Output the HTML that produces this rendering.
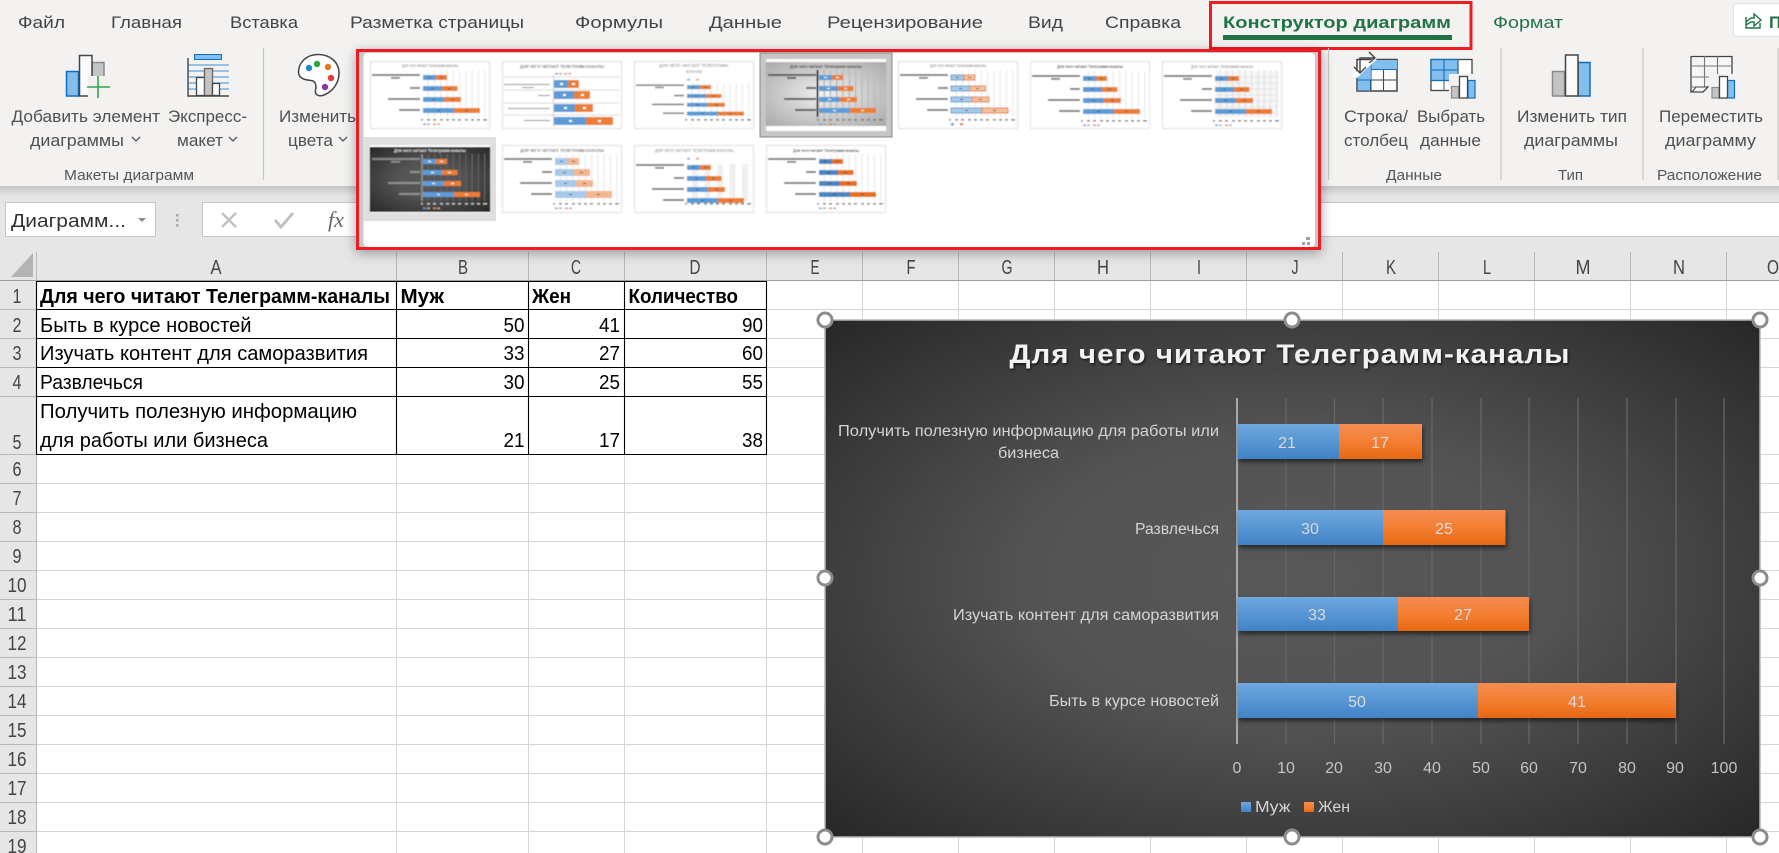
<!DOCTYPE html>
<html lang="ru"><head><meta charset="utf-8"><title>Excel</title>
<style>
html,body{margin:0;padding:0;background:#fff;width:1779px;height:853px;overflow:hidden}
svg{display:block;font-family:"Liberation Sans","Noto Sans CJK SC",sans-serif}
.tab{font-size:17px;fill:#444}
.rb{font-size:16.5px;fill:#505050}
.grp{font-size:15px;fill:#555}
.cell{font-size:20px;fill:#000}
.b{font-weight:bold}
.hd{font-size:20px;fill:#444;text-anchor:middle}
.cat{font-size:15.5px;fill:#d4d4d4}
.dl{font-size:16px;fill:#dadada;text-anchor:middle}
.ax{font-size:16px;fill:#c4c4c4;text-anchor:middle}
.bl{fill:#5b9bd5}.or{fill:#ed7d31}
.ttl{font-size:4.6px;fill:#777;text-anchor:middle}
</style></head><body>
<svg width="1779" height="853" viewBox="0 0 1779 853" xmlns="http://www.w3.org/2000/svg">
<defs>
<radialGradient id="cg" cx=".5" cy=".5" r=".71"><stop offset="0" stop-color="#585858"/><stop offset=".4" stop-color="#535353"/><stop offset="1" stop-color="#272727"/></radialGradient>
<radialGradient id="lg" cx=".5" cy=".5" r=".71"><stop offset="0" stop-color="#f2f2f2"/><stop offset="1" stop-color="#a8a8a8"/></radialGradient>
<linearGradient id="gb" x1="0" y1="0" x2="0" y2="1"><stop offset="0" stop-color="#6fa8df"/><stop offset="1" stop-color="#4083c6"/></linearGradient>
<linearGradient id="go" x1="0" y1="0" x2="0" y2="1"><stop offset="0" stop-color="#f58c52"/><stop offset=".5" stop-color="#f47f33"/><stop offset="1" stop-color="#e76711"/></linearGradient>
<linearGradient id="sh" x1="0" y1="0" x2="0" y2="1"><stop offset="0" stop-color="#c4c4c4"/><stop offset="1" stop-color="#e6e6e6"/></linearGradient>
<filter id="bs" x="-10%" y="-30%" width="120%" height="180%"><feDropShadow dx="1" dy="3" stdDeviation="2.5" flood-color="#000" flood-opacity=".55"/></filter>
<filter id="ts" x="-5%" y="-30%" width="110%" height="170%"><feDropShadow dx="1" dy="1.5" stdDeviation="1.2" flood-color="#000" flood-opacity=".7"/></filter>
<filter id="gs" x="-5%" y="-10%" width="110%" height="125%"><feDropShadow dx="0" dy="3" stdDeviation="6" flood-color="#000" flood-opacity=".35"/></filter>
<filter id="bl" x="-5%" y="-5%" width="110%" height="110%"><feGaussianBlur stdDeviation=".5"/></filter>
<g id="L" fill="#555" opacity=".75">
<rect x="2" y="13" width="48" height="2"/><rect x="21" y="16" width="9" height="1.800"/><rect x="40" y="26" width="10" height="2"/><rect x="18" y="37" width="32" height="2"/><rect x="29" y="48" width="21" height="2"/></g>
<g id="G" stroke-width="1.4"><path d="M58.3 9V56M64.5 9V56M70.8 9V56M77 9V56M83.4 9V56M89.6 9V56M95.9 9V56M102.2 9V56M108.4 9V56M114.7 9V56"/></g>
<g id="X" fill="#666" opacity=".8"><path d="M51 58h2v1.600h-2zM57 58h3v1.600h-3zM63 58h3v1.600h-3zM70 58h3v1.600h-3zM76 58h3v1.600h-3zM82 58h3v1.600h-3zM88 58h3v1.600h-3zM95 58h3v1.600h-3zM101 58h3v1.600h-3zM107 58h3v1.600h-3zM113 58h4v1.600h-4z"/></g>
<g id="BL"><rect x="53" y="14" width="13" height="5"/><rect x="53" y="25" width="19" height="5"/><rect x="53" y="36" width="21" height="5"/><rect x="53" y="47" width="31" height="5"/></g>
<g id="BO"><rect x="66" y="14" width="11" height="5"/><rect x="72" y="25" width="15.5" height="5"/><rect x="74" y="36" width="17" height="5"/><rect x="84" y="47" width="26" height="5"/></g>
<g id="LG"><rect x="53" y="62.5" width="3" height="1.5" fill="#5b9bd5"/><rect x="57" y="62.5" width="3" height="1.5" fill="#aaa"/><rect x="63" y="62.5" width="3" height="1.5" fill="#ed7d31"/><rect x="67" y="62.5" width="3" height="1.5" fill="#aaa"/></g>
<g id="D"><path d="M58 16h3v1h-3zM70 16h3v1h-3zM61 27h3v1h-3zM78 27h3v1h-3zM62 38h3v1h-3zM81 38h3v1h-3zM67 49h3v1h-3zM95 49h3v1h-3z"/></g>
</defs>

<!-- ribbon -->
<rect width="1779" height="186" fill="#f3f2f1"/>
<rect y="186" width="1779" height="10" fill="url(#sh)"/>
<rect y="196" width="1779" height="54" fill="#e6e6e6"/>

<text class="tab" x="18" y="28" textLength="47" lengthAdjust="spacingAndGlyphs">Файл</text>
<text class="tab" x="111" y="28" textLength="71" lengthAdjust="spacingAndGlyphs">Главная</text>
<text class="tab" x="230" y="28" textLength="68" lengthAdjust="spacingAndGlyphs">Вставка</text>
<text class="tab" x="350" y="28" textLength="174" lengthAdjust="spacingAndGlyphs">Разметка страницы</text>
<text class="tab" x="575" y="28" textLength="88" lengthAdjust="spacingAndGlyphs">Формулы</text>
<text class="tab" x="709" y="28" textLength="73" lengthAdjust="spacingAndGlyphs">Данные</text>
<text class="tab" x="827" y="28" textLength="156" lengthAdjust="spacingAndGlyphs">Рецензирование</text>
<text class="tab" x="1028" y="28" textLength="35" lengthAdjust="spacingAndGlyphs">Вид</text>
<text class="tab" x="1105" y="28" textLength="76" lengthAdjust="spacingAndGlyphs">Справка</text>
<text class="tab b" x="1223" y="28" textLength="228" lengthAdjust="spacingAndGlyphs" style="fill:#217346">Конструктор диаграмм</text>
<rect x="1223" y="35" width="229" height="5" fill="#217346"/>
<rect x="1210.5" y="2.5" width="260.500" height="46" fill="none" stroke="#ed1c24" stroke-width="3"/>
<text class="tab" x="1493" y="28" textLength="70" lengthAdjust="spacingAndGlyphs" style="fill:#217346">Формат</text>
<rect x="1733.500" y="3.500" width="50" height="33" rx="3" fill="#fff" stroke="#e3e3e3"/>
<path d="M1746 17v11h14v-5M1746 22l5-4h3v-4l7 6-7 6v-4h-3l-5 3" fill="none" stroke="#217346" stroke-width="1.4"/>
<text class="tab b" x="1769" y="28" style="fill:#217346">П</text>

<!-- separators -->
<g stroke="#c8c6c4" stroke-width="1.2"><path d="M263.500 48V180M1328.500 48V180M1501 48V180M1643 48V180M1778 48V180"/></g>

<!-- add element icon -->
<rect x="66.500" y="71.500" width="12" height="24.500" fill="#83beec" stroke="#106ebe" stroke-width="1.5"/>
<rect x="92" y="62.500" width="12" height="33.500" fill="#c4c4c4" stroke="#8a8a8a" stroke-width="1.5"/>
<rect x="79.500" y="55.500" width="12.500" height="40.500" fill="#fafafa" stroke="#444" stroke-width="1.5"/>
<rect x="88" y="76" width="20" height="22" fill="#f3f2f1"/>
<path d="M98 76V98M87 87H110" stroke="#2fa84f" stroke-width="1.6"/>
<!-- express layout icon -->
<rect x="194.500" y="54.500" width="27" height="5" fill="#83beec" stroke="#106ebe"/>
<g stroke="#5ba4e0" stroke-width="1.2"><path d="M188 65H229M188 71H229M188 77H229M188 83H229M188 89H229"/></g>
<rect x="196.500" y="77.500" width="8" height="18" fill="#fff" stroke="#444" stroke-width="1.3"/>
<rect x="204.500" y="68.500" width="8" height="27" fill="#c4c4c4" stroke="#666" stroke-width="1.3"/>
<rect x="212.500" y="83.500" width="7" height="12" fill="#fff" stroke="#444" stroke-width="1.3"/>
<path d="M188 58V96H229" fill="none" stroke="#444" stroke-width="1.4"/>
<!-- palette -->
<path d="M318 54.500C306 54.500 298.500 63 298.500 72C298.500 79 306 80 311 80.500C316 81 316.500 86 315.500 90C314.500 95 319 97 324 95C334 91 339 82 339 73C339 62 330 54.500 318 54.500Z" fill="#fff" stroke="#444" stroke-width="1.5"/>
<circle cx="309" cy="68" r="3.200" fill="#1b87d6"/><circle cx="317" cy="64" r="3.200" fill="#2ba24c"/><circle cx="328" cy="67" r="3.200" fill="#e8791f"/><circle cx="331" cy="78" r="3.200" fill="#e63a3a"/><circle cx="325" cy="87" r="3.200" fill="#8c34a8"/>

<text class="rb" x="11.500" y="122" textLength="148.500" lengthAdjust="spacingAndGlyphs">Добавить элемент</text>
<text class="rb" x="30" y="146" textLength="94" lengthAdjust="spacingAndGlyphs">диаграммы</text>
<path d="M132 137l4 4 4-4" fill="none" stroke="#555" stroke-width="1.300"/>
<text class="rb" x="168" y="122" textLength="79" lengthAdjust="spacingAndGlyphs">Экспресс-</text>
<text class="rb" x="177" y="146" textLength="46" lengthAdjust="spacingAndGlyphs">макет</text>
<path d="M229 137l4 4 4-4" fill="none" stroke="#555" stroke-width="1.300"/>
<text class="rb" x="279" y="122" textLength="77" lengthAdjust="spacingAndGlyphs">Изменить</text>
<text class="rb" x="288" y="146" textLength="45" lengthAdjust="spacingAndGlyphs">цвета</text>
<path d="M339 137l4 4 4-4" fill="none" stroke="#555" stroke-width="1.300"/>
<text class="grp" x="64" y="180" textLength="130" lengthAdjust="spacingAndGlyphs">Макеты диаграмм</text>

<!-- switch row/col icon -->
<rect x="1357" y="59.500" width="40" height="31.500" fill="#fbfbfb" stroke="#444" stroke-width="1.500"/>
<path d="M1371 60H1397V69H1371ZM1358 80H1370V90.500H1358ZM1371 60L1358 77V80H1370V60Z" fill="#83beec"/>
<g stroke="#4a4a4a" stroke-width="1.100"><path d="M1383.500 69V91M1370.500 80V91M1370.500 69.500H1397M1370.500 80H1397"/></g>
<path d="M1371 59.500V91M1357 80H1371M1371 69.500H1397" stroke="#106ebe" stroke-width="1.100" fill="none"/>
<path d="M1374 59L1377 59.500L1357 77L1357 73Z" fill="#f3f2f1"/>
<path d="M1370 53H1351V73H1365V53Z" fill="none"/>
<path d="M1352 75L1376 56V59L1357 78Z" fill="#fff"/>
<path d="M1375 58H1360V73M1369 52L1375 58L1369 63M1354 67L1360 73L1366 67" fill="none" stroke="#444" stroke-width="1.400"/>
<!-- select data icon -->
<rect x="1431" y="59.500" width="41" height="31" fill="#fff" stroke="#444" stroke-width="1.300"/>
<rect x="1431" y="59.500" width="27" height="21" fill="#83beec" stroke="#106ebe" stroke-width="1.300"/>
<g stroke="#106ebe" stroke-width="1.100"><path d="M1444 59V80M1431 70H1458"/></g>
<path d="M1444 81V91M1458 59V75" stroke="#666" stroke-width="1.100"/>
<rect x="1449" y="74" width="28" height="25" fill="#f3f2f1"/>
<rect x="1451.500" y="86.500" width="7" height="11.500" fill="#c4c4c4" stroke="#8a8a8a" stroke-width="1.200"/>
<rect x="1468" y="80.500" width="7" height="17.500" fill="#83beec" stroke="#106ebe" stroke-width="1.200"/>
<rect x="1459.500" y="76.500" width="8" height="21.500" fill="#fff" stroke="#444" stroke-width="1.300"/>
<text class="rb" x="1344" y="122" textLength="64" lengthAdjust="spacingAndGlyphs">Строка/</text>
<text class="rb" x="1344" y="146" textLength="64" lengthAdjust="spacingAndGlyphs">столбец</text>
<text class="rb" x="1417" y="122" textLength="68" lengthAdjust="spacingAndGlyphs">Выбрать</text>
<text class="rb" x="1420" y="146" textLength="61" lengthAdjust="spacingAndGlyphs">данные</text>
<text class="grp" x="1386" y="180" textLength="56" lengthAdjust="spacingAndGlyphs">Данные</text>
<!-- change type icon -->
<rect x="1552.500" y="71.500" width="12" height="24.500" fill="#c4c4c4" stroke="#8a8a8a" stroke-width="1.500"/>
<rect x="1578" y="62.500" width="12" height="33.500" fill="#83beec" stroke="#106ebe" stroke-width="1.500"/>
<rect x="1565.500" y="55" width="12.500" height="41" fill="#fafafa" stroke="#444" stroke-width="1.500"/>
<text class="rb" x="1517" y="122" textLength="110" lengthAdjust="spacingAndGlyphs">Изменить тип</text>
<text class="rb" x="1524" y="146" textLength="94" lengthAdjust="spacingAndGlyphs">диаграммы</text>
<text class="grp" x="1558" y="180" textLength="25" lengthAdjust="spacingAndGlyphs">Тип</text>
<!-- move chart icon -->
<path d="M1691 56.500H1732V80M1691 56.500V92H1703L1708 87V86" fill="#f7f7f7" stroke="#444" stroke-width="1.300"/>
<path d="M1691 66H1732M1691 77H1732M1691 87H1708M1704.500 56V87M1717.500 56V87" stroke="#777" stroke-width="1.100" fill="none"/>
<path d="M1692 92l4-5h12" fill="none" stroke="#444" stroke-width="1.100"/>
<rect x="1709" y="74" width="28" height="25" fill="#f3f2f1"/>
<rect x="1712" y="87.500" width="7" height="10.500" fill="#c4c4c4" stroke="#8a8a8a" stroke-width="1.200"/>
<rect x="1727.500" y="80.500" width="7" height="17.500" fill="#83beec" stroke="#106ebe" stroke-width="1.200"/>
<rect x="1719.500" y="76.500" width="8" height="21.500" fill="#fff" stroke="#444" stroke-width="1.300"/>
<text class="rb" x="1659" y="122" textLength="104" lengthAdjust="spacingAndGlyphs">Переместить</text>
<text class="rb" x="1665" y="146" textLength="91" lengthAdjust="spacingAndGlyphs">диаграмму</text>
<text class="grp" x="1657" y="180" textLength="105" lengthAdjust="spacingAndGlyphs">Расположение</text>

<!-- formula bar -->
<rect x="5.500" y="202.500" width="150" height="34" fill="#fff" stroke="#c6c6c6"/>
<text x="11" y="227" font-size="18" fill="#333" textLength="115" lengthAdjust="spacingAndGlyphs">Диаграмм...</text>
<path d="M138 218h8l-4 4z" fill="#8a8a8a"/>
<path d="M176 214h2.500v2.500h-2.500zM176 219h2.500v2.500h-2.500zM176 224h2.500v2.500h-2.500z" fill="#a8a8a8"/>
<rect x="202.500" y="202.500" width="1580" height="34" fill="#fff" stroke="#c6c6c6"/>
<path d="M222 213L236 227M236 213L222 227" stroke="#c2c2c2" stroke-width="2.400"/>
<path d="M275 220L281 227L293 213" fill="none" stroke="#c2c2c2" stroke-width="3"/>
<text x="328" y="227" font-size="22" fill="#666" style="font-family:'Liberation Serif',serif;font-style:italic">fx</text>

<!-- grid lines -->
<g stroke="#d6d6d6" stroke-width="1">
<path d="M766.500 281V853M862.500 281V853M958.500 281V853M1054.500 281V853M1150.500 281V853M1246.500 281V853M1342.500 281V853M1438.500 281V853M1534.500 281V853M1630.500 281V853M1726.500 281V853"/>
<path d="M396.500 454V853M528.500 454V853M624.500 454V853"/>
<path d="M36 483.500H1779M36 512.500H1779M36 541.500H1779M36 570.500H1779M36 599.500H1779M36 628.500H1779M36 657.500H1779M36 686.500H1779M36 715.500H1779M36 744.500H1779M36 773.500H1779M36 802.500H1779M36 831.500H1779"/>
<path d="M766 309.500H1779M766 338.500H1779M766 367.500H1779M766 396.500H1779M766 454.500H1779"/>
</g>

<!-- headers -->
<rect y="250" width="1779" height="31" fill="#e6e6e6"/>
<rect y="250" width="36" height="603" fill="#e6e6e6"/>
<g stroke="#b8b8b8"><path d="M36.500 252V853M396.500 252V281M528.500 252V281M624.500 252V281M766.500 252V281M862.500 252V281M958.500 252V281M1054.500 252V281M1150.500 252V281M1246.500 252V281M1342.500 252V281M1438.500 252V281M1534.500 252V281M1630.500 252V281M1726.500 252V281"/>
<path d="M0 309.500H36M0 338.500H36M0 367.500H36M0 396.500H36M0 454.500H36M0 483.500H36M0 512.500H36M0 541.500H36M0 570.500H36M0 599.500H36M0 628.500H36M0 657.500H36M0 686.500H36M0 715.500H36M0 744.500H36M0 773.500H36M0 802.500H36M0 831.500H36"/></g>
<path d="M0 280.500H1779" stroke="#9e9e9e"/>
<path d="M33 253V277H11Z" fill="#b4b4b4"/>
<text class="hd" x="216" y="274" textLength="11" lengthAdjust="spacingAndGlyphs">A</text>
<text class="hd" x="463" y="274" textLength="10" lengthAdjust="spacingAndGlyphs">B</text><text class="hd" x="576" y="274" textLength="10" lengthAdjust="spacingAndGlyphs">C</text><text class="hd" x="695" y="274" textLength="11" lengthAdjust="spacingAndGlyphs">D</text><text class="hd" x="815" y="274" textLength="9" lengthAdjust="spacingAndGlyphs">E</text><text class="hd" x="911" y="274" textLength="9" lengthAdjust="spacingAndGlyphs">F</text><text class="hd" x="1007" y="274" textLength="11" lengthAdjust="spacingAndGlyphs">G</text><text class="hd" x="1103" y="274" textLength="12" lengthAdjust="spacingAndGlyphs">H</text><text class="hd" x="1199" y="274" textLength="4" lengthAdjust="spacingAndGlyphs">I</text><text class="hd" x="1295" y="274" textLength="7" lengthAdjust="spacingAndGlyphs">J</text><text class="hd" x="1391" y="274" textLength="10" lengthAdjust="spacingAndGlyphs">K</text><text class="hd" x="1487" y="274" textLength="8" lengthAdjust="spacingAndGlyphs">L</text><text class="hd" x="1583" y="274" textLength="15" lengthAdjust="spacingAndGlyphs">M</text><text class="hd" x="1679" y="274" textLength="12" lengthAdjust="spacingAndGlyphs">N</text><text class="hd" x="1773" y="274" textLength="12" lengthAdjust="spacingAndGlyphs">O</text>
<text class="hd" x="17" y="303" textLength="9" lengthAdjust="spacingAndGlyphs">1</text><text class="hd" x="17" y="332" textLength="9" lengthAdjust="spacingAndGlyphs">2</text><text class="hd" x="17" y="360" textLength="9" lengthAdjust="spacingAndGlyphs">3</text><text class="hd" x="17" y="389" textLength="9" lengthAdjust="spacingAndGlyphs">4</text><text class="hd" x="17" y="449" textLength="9" lengthAdjust="spacingAndGlyphs">5</text><text class="hd" x="17" y="476" textLength="9" lengthAdjust="spacingAndGlyphs">6</text><text class="hd" x="17" y="505" textLength="9" lengthAdjust="spacingAndGlyphs">7</text><text class="hd" x="17" y="534" textLength="9" lengthAdjust="spacingAndGlyphs">8</text><text class="hd" x="17" y="563" textLength="9" lengthAdjust="spacingAndGlyphs">9</text><text class="hd" x="17" y="592" textLength="19" lengthAdjust="spacingAndGlyphs">10</text><text class="hd" x="17" y="621" textLength="19" lengthAdjust="spacingAndGlyphs">11</text><text class="hd" x="17" y="650" textLength="19" lengthAdjust="spacingAndGlyphs">12</text><text class="hd" x="17" y="679" textLength="19" lengthAdjust="spacingAndGlyphs">13</text><text class="hd" x="17" y="708" textLength="19" lengthAdjust="spacingAndGlyphs">14</text><text class="hd" x="17" y="737" textLength="19" lengthAdjust="spacingAndGlyphs">15</text><text class="hd" x="17" y="766" textLength="19" lengthAdjust="spacingAndGlyphs">16</text><text class="hd" x="17" y="795" textLength="19" lengthAdjust="spacingAndGlyphs">17</text><text class="hd" x="17" y="824" textLength="19" lengthAdjust="spacingAndGlyphs">18</text><text class="hd" x="17" y="853" textLength="19" lengthAdjust="spacingAndGlyphs">19</text>

<!-- table -->
<g stroke="#000" stroke-width="1.100"><path d="M36.500 281V454M396.500 281V454M528.500 281V454M624.500 281V454M766.500 281V454M36 281.500H767M36 309.500H767M36 338.500H767M36 367.500H767M36 396.500H767M36 454.500H767"/></g>
<text class="cell b" x="40" y="303" textLength="350" lengthAdjust="spacingAndGlyphs">Для чего читают Телеграмм-каналы</text>
<text class="cell b" x="400.500" y="303" textLength="43.500" lengthAdjust="spacingAndGlyphs">Муж</text>
<text class="cell b" x="532" y="303" textLength="39" lengthAdjust="spacingAndGlyphs">Жен</text>
<text class="cell b" x="628.500" y="303" textLength="109.500" lengthAdjust="spacingAndGlyphs">Количество</text>
<text class="cell" x="40" y="332" textLength="211.500" lengthAdjust="spacingAndGlyphs">Быть в курсе новостей</text>
<text class="cell" x="40" y="360" textLength="328" lengthAdjust="spacingAndGlyphs">Изучать контент для саморазвития</text>
<text class="cell" x="40" y="389" textLength="103" lengthAdjust="spacingAndGlyphs">Развлечься</text>
<text class="cell" x="40" y="418" textLength="317" lengthAdjust="spacingAndGlyphs">Получить полезную информацию</text>
<text class="cell" x="40" y="447" textLength="228" lengthAdjust="spacingAndGlyphs">для работы или бизнеса</text>
<g text-anchor="end">
<text class="cell" x="524.500" y="332" textLength="21" lengthAdjust="spacingAndGlyphs">50</text><text class="cell" x="620" y="332" textLength="21" lengthAdjust="spacingAndGlyphs">41</text><text class="cell" x="763" y="332" textLength="21" lengthAdjust="spacingAndGlyphs">90</text>
<text class="cell" x="524.500" y="360" textLength="21" lengthAdjust="spacingAndGlyphs">33</text><text class="cell" x="620" y="360" textLength="21" lengthAdjust="spacingAndGlyphs">27</text><text class="cell" x="763" y="360" textLength="21" lengthAdjust="spacingAndGlyphs">60</text>
<text class="cell" x="524.500" y="389" textLength="21" lengthAdjust="spacingAndGlyphs">30</text><text class="cell" x="620" y="389" textLength="21" lengthAdjust="spacingAndGlyphs">25</text><text class="cell" x="763" y="389" textLength="21" lengthAdjust="spacingAndGlyphs">55</text>
<text class="cell" x="524.500" y="447" textLength="21" lengthAdjust="spacingAndGlyphs">21</text><text class="cell" x="620" y="447" textLength="21" lengthAdjust="spacingAndGlyphs">17</text><text class="cell" x="763" y="447" textLength="21" lengthAdjust="spacingAndGlyphs">38</text>
</g>

<!-- chart -->
<rect x="825" y="320" width="935" height="517" fill="url(#cg)"/>
<rect x="825" y="320" width="935" height="517" fill="none" stroke="#b5b5b5" stroke-width="1.500"/>
<text x="1290" y="363" font-size="27" font-weight="bold" fill="#f2f2f2" text-anchor="middle" filter="url(#ts)" textLength="561" lengthAdjust="spacingAndGlyphs" style="letter-spacing:1px">Для чего читают Телеграмм-каналы</text>
<g stroke="#666" stroke-width="1.300"><path d="M1286 398V744M1334.500 398V744M1383 398V744M1432 398V744M1481 398V744M1529 398V744M1578 398V744M1627 398V744M1676 398V744M1724 398V744"/></g>
<rect x="1236" y="398" width="2" height="346" fill="#a8a8a8"/>
<g filter="url(#bs)">
<rect x="1238" y="424" width="101" height="35" fill="url(#gb)"/><rect x="1339" y="424" width="83" height="35" fill="url(#go)"/>
<rect x="1238" y="510" width="145" height="35" fill="url(#gb)"/><rect x="1383" y="510" width="122.500" height="35" fill="url(#go)"/>
<rect x="1238" y="597" width="160" height="34" fill="url(#gb)"/><rect x="1398" y="597" width="131" height="34" fill="url(#go)"/>
<rect x="1238" y="683" width="240" height="35" fill="url(#gb)"/><rect x="1478" y="683" width="198" height="35" fill="url(#go)"/>
</g>
<text class="dl" x="1287" y="448">21</text><text class="dl" x="1380" y="448">17</text>
<text class="dl" x="1310" y="534">30</text><text class="dl" x="1444" y="534">25</text>
<text class="dl" x="1317" y="620">33</text><text class="dl" x="1463" y="620">27</text>
<text class="dl" x="1357" y="707">50</text><text class="dl" x="1577" y="707">41</text>
<text class="cat" x="838" y="436" textLength="381" lengthAdjust="spacingAndGlyphs">Получить полезную информацию для работы или</text>
<text class="cat" x="998" y="458" textLength="61" lengthAdjust="spacingAndGlyphs">бизнеса</text>
<text class="cat" x="1135" y="534" textLength="84" lengthAdjust="spacingAndGlyphs">Развлечься</text>
<text class="cat" x="953" y="620" textLength="266" lengthAdjust="spacingAndGlyphs">Изучать контент для саморазвития</text>
<text class="cat" x="1049" y="706" textLength="170" lengthAdjust="spacingAndGlyphs">Быть в курсе новостей</text>
<text class="ax" x="1237" y="773">0</text><text class="ax" x="1286" y="773">10</text><text class="ax" x="1334" y="773">20</text><text class="ax" x="1383" y="773">30</text><text class="ax" x="1432" y="773">40</text><text class="ax" x="1481" y="773">50</text><text class="ax" x="1529" y="773">60</text><text class="ax" x="1578" y="773">70</text><text class="ax" x="1627" y="773">80</text><text class="ax" x="1675" y="773">90</text><text class="ax" x="1724" y="773">100</text>
<rect x="1241" y="802" width="10" height="10" fill="url(#gb)"/>
<text class="cat" x="1255" y="812" textLength="35.500" lengthAdjust="spacingAndGlyphs">Муж</text>
<rect x="1304" y="802" width="10" height="10" fill="url(#go)"/>
<text class="cat" x="1318" y="812" textLength="32" lengthAdjust="spacingAndGlyphs">Жен</text>
<g fill="#fff" stroke="#8c8c8c" stroke-width="3">
<circle cx="825" cy="320" r="7"/><circle cx="1292" cy="320" r="7"/><circle cx="1760" cy="320" r="7"/><circle cx="825" cy="578" r="7"/><circle cx="1760" cy="578" r="7"/><circle cx="825" cy="837" r="7"/><circle cx="1292" cy="837" r="7"/><circle cx="1760" cy="837" r="7"/>
</g>

<!-- gallery -->
<rect x="357.500" y="50.500" width="962" height="198" fill="#fff" stroke="#ed1c24" stroke-width="3" filter="url(#gs)"/>
<rect x="359" y="52" width="959" height="195" fill="#c8c8c8"/>
<rect x="363.500" y="53" width="951.500" height="194" rx="4" fill="#fff"/>
<rect x="357.500" y="50.500" width="962" height="198" fill="none" stroke="#ed1c24" stroke-width="3"/>
<path d="M1306 237h4v3h-4zM1302 242h3v3h-3zM1307 242h3v3h-3z" fill="#a0a0a0"/>
<rect x="760" y="53" width="132" height="84" fill="#c8c6c4" stroke="#8a8886"/>
<rect x="364" y="137" width="132" height="84" fill="#e1dfdd"/>

<g filter="url(#bl)">
<!-- T1 -->
<g transform="translate(370 61)"><rect x=".5" y=".5" width="119" height="67" fill="#fff" stroke="#e8e8e8" stroke-width="1.500"/>
<use href="#G" stroke="#ececec"/><use href="#L"/><use href="#BL" class="bl"/><use href="#BO" class="or"/><use href="#D" fill="#555"/><use href="#X"/><use href="#LG"/>
<text class="ttl" x="60" y="6" textLength="56" lengthAdjust="spacingAndGlyphs">Для чего читают Телеграмм-каналы</text></g>
<!-- T2 -->
<g transform="translate(502 61)"><rect x=".5" y=".5" width="119" height="67" fill="#fff" stroke="#e8e8e8" stroke-width="1.500"/>
<path d="M1 16H117M1 29H117M1 42H117M1 54H117" stroke="#ddd"/><path d="M51.500 14V66" stroke="#ccc"/>
<rect x="52" y="19" width="14" height="8" fill="#5b9bd5"/><rect x="66" y="19" width="11" height="8" fill="#ed7d31"/><rect x="52" y="30" width="20" height="8" fill="#5b9bd5"/><rect x="72" y="30" width="16" height="8" fill="#ed7d31"/><rect x="52" y="43" width="21" height="8" fill="#5b9bd5"/><rect x="73" y="43" width="18" height="8" fill="#ed7d31"/><rect x="52" y="56" width="32" height="8" fill="#5b9bd5"/><rect x="84" y="56" width="27" height="8" fill="#ed7d31"/>
<path d="M58 22h3v2h-3zM70 22h3v2h-3zM61 33h3v2h-3zM79 33h3v2h-3zM62 46h3v2h-3zM81 46h3v2h-3zM67 59h3v2h-3zM96 59h3v2h-3z" fill="#fff"/>
<path d="M2 23h46v1H2zM20 26h12v1H20zM36 34h12v1H36zM6 47h42v1H6zM22 59h26v1H22z" fill="#888"/>
<rect x="53" y="12" width="3" height="1.500" fill="#5b9bd5"/><rect x="57" y="12" width="3" height="1.500" fill="#aaa"/><rect x="62" y="12" width="3" height="1.500" fill="#ed7d31"/><rect x="66" y="12" width="3" height="1.500" fill="#aaa"/>
<text class="ttl b" x="60" y="7" textLength="84" lengthAdjust="spacingAndGlyphs">ДЛЯ ЧЕГО ЧИТАЮТ ТЕЛЕГРАММ-КАНАЛЫ</text></g>
<!-- T3 -->
<g transform="translate(634 61)"><rect x=".5" y=".5" width="119" height="67" fill="#fff" stroke="#e8e8e8" stroke-width="1.500"/>
<g transform="translate(0 0)"><path d="M58.300 22V56M64.500 22V56M70.800 22V56M77 22V56M83.400 22V56M89.600 22V56M95.900 22V56M102.200 22V56M108.400 22V56M114.700 22V56" stroke="#ececec" stroke-width="1.400"/></g>
<g transform="translate(0 13) scale(1 .8)"><use href="#BL" class="bl"/><use href="#BO" class="or"/><use href="#L"/><use href="#D" fill="#555"/></g><use href="#X"/>
<rect x="53" y="18" width="3" height="1.500" fill="#5b9bd5"/><rect x="62" y="18" width="3" height="1.500" fill="#ed7d31"/>
<text class="ttl" x="60" y="6" textLength="70" lengthAdjust="spacingAndGlyphs">ДЛЯ ЧЕГО ЧИТАЮТ ТЕЛЕГРАММ-</text><text class="ttl" x="60" y="12" textLength="16" lengthAdjust="spacingAndGlyphs">КАНАЛЫ</text></g>
<!-- T4 -->
<g transform="translate(766 59)"><rect width="120" height="72" fill="#fff"/><rect y="3" width="120" height="64" fill="url(#lg)"/>
<g transform="translate(0 2)"><use href="#G" stroke="#bbb"/><rect x="50.500" y="9" width="2" height="47" fill="#333"/><use href="#L"/><use href="#L"/><use href="#BL" fill="#5b9bd5"/><use href="#BO" fill="#ed7d31"/><use href="#D" fill="#fff"/><use href="#X"/><use href="#LG"/></g>
<text class="ttl b" x="60" y="9" textLength="72" style="fill:#444" lengthAdjust="spacingAndGlyphs">Для чего читают Телеграмм-каналы</text></g>
<!-- T5 -->
<g transform="translate(898 61)"><rect x=".5" y=".5" width="119" height="67" fill="#fff" stroke="#e8e8e8" stroke-width="1.500"/>
<use href="#G" stroke="#ececec"/><use href="#L"/><use href="#BL" fill="#a9c9e8" stroke="#5b9bd5"/><use href="#BO" fill="#f5c1a0" stroke="#ed7d31"/><use href="#D" fill="#555"/><use href="#X"/>
<rect x="53" y="62" width="3" height="2.500" fill="#5b9bd5"/><rect x="62" y="62" width="3" height="2.500" fill="#ed7d31"/>
<text class="ttl" x="60" y="6" textLength="56" lengthAdjust="spacingAndGlyphs">Для чего читают Телеграмм-каналы</text></g>
<!-- T6 -->
<g transform="translate(1030 61)"><rect x=".5" y=".5" width="119" height="67" fill="#fff" stroke="#e6ecf2" stroke-width="1.500"/>
<g transform="translate(0 1)"><use href="#G" stroke="#ececec"/><use href="#L"/><use href="#BL" class="bl"/><use href="#BO" class="or"/><use href="#D" fill="#555"/><use href="#X"/><use href="#LG"/></g>
<text class="ttl b" x="60" y="7" textLength="66" style="fill:#555" lengthAdjust="spacingAndGlyphs">Для чего читают Телеграмм-каналы</text></g>
<!-- T7 -->
<g transform="translate(1162 61)"><rect x=".5" y=".5" width="119" height="67" fill="#fff" stroke="#e8e8e8" stroke-width="1.500"/>
<rect x="53" y="10" width="63" height="46" fill="#f6f6f6"/><path d="M53 16H116M53 22H116M53 28H116M53 34H116M53 40H116M53 46H116M53 52H116" stroke="#e4e4e4"/><use href="#G" stroke="#e4e4e4"/>
<g transform="translate(0 1)"><use href="#L"/><use href="#BL" class="bl"/><use href="#BO" class="or"/><use href="#D" fill="#555"/><use href="#X"/><use href="#LG"/></g>
<text class="ttl" x="60" y="7" textLength="62" lengthAdjust="spacingAndGlyphs">Для чего читают Телеграмм-каналы</text></g>
<!-- T8 dark -->
<g transform="translate(370 145)"><rect width="120" height="68" fill="#fff"/><rect y="2" width="120" height="65" fill="url(#cg)"/>
<use href="#G" stroke="#5e5e5e"/><g transform="translate(0 0)"><rect x="51" y="9" width="2" height="47" fill="#888"/><rect x="2" y="13" width="48" height="2" fill="#bbb" opacity=".6"/><rect x="21" y="16" width="9" height="1.800" fill="#bbb" opacity=".6"/><rect x="40" y="26" width="10" height="2" fill="#bbb" opacity=".6"/><rect x="18" y="37" width="32" height="2" fill="#bbb" opacity=".6"/><rect x="29" y="48" width="21" height="2" fill="#bbb" opacity=".6"/><use href="#BL" class="bl"/><use href="#BO" class="or"/><use href="#D" fill="#fff"/><path d="M51 58h2v1.600h-2zM57 58h3v1.600h-3zM63 58h3v1.600h-3zM70 58h3v1.600h-3zM76 58h3v1.600h-3zM82 58h3v1.600h-3zM88 58h3v1.600h-3zM95 58h3v1.600h-3zM101 58h3v1.600h-3zM107 58h3v1.600h-3zM113 58h4v1.600h-4z" fill="#bbb"/><use href="#LG"/></g>
<text class="ttl b" x="60" y="7" textLength="72" style="fill:#ddd" lengthAdjust="spacingAndGlyphs">Для чего читают Телеграмм-каналы</text></g>
<!-- T9 -->
<g transform="translate(502 145)"><rect x=".5" y=".5" width="119" height="67" fill="#fff" stroke="#e8e8e8" stroke-width="1.500"/>
<use href="#G" stroke="#ececec"/><use href="#L"/><g transform="translate(0 -1) scale(1 1)"><rect x="53" y="14" width="13" height="7" fill="#a7c9ea"/><rect x="66" y="14" width="11" height="7" fill="#f3b68f"/><rect x="53" y="25" width="19" height="7" fill="#a7c9ea"/><rect x="72" y="25" width="16" height="7" fill="#f3b68f"/><rect x="53" y="36" width="21" height="7" fill="#a7c9ea"/><rect x="74" y="36" width="17" height="7" fill="#f3b68f"/><rect x="53" y="47" width="31" height="7" fill="#a7c9ea"/><rect x="84" y="47" width="26" height="7" fill="#f3b68f"/></g><use href="#D" fill="#555"/><use href="#X"/><use href="#LG"/>
<text class="ttl b" x="60" y="7" textLength="84" lengthAdjust="spacingAndGlyphs">ДЛЯ ЧЕГО ЧИТАЮТ ТЕЛЕГРАММ-КАНАЛЫ</text></g>
<!-- T10 -->
<g transform="translate(634 145)"><rect x=".5" y=".5" width="119" height="67" fill="#fff" stroke="#e8e8e8" stroke-width="1.500"/>
<path d="M61 19V56M73.500 19V56M86 19V56M98.500 19V56M111 19V56" stroke="#f0f0f0" stroke-width="6"/>
<g transform="translate(0 6)"><use href="#L"/><use href="#BL" class="bl"/><use href="#BO" class="or"/><use href="#D" fill="#555"/></g><use href="#X"/>
<rect x="53" y="13" width="3" height="1.500" fill="#5b9bd5"/><rect x="62" y="13" width="3" height="1.500" fill="#ed7d31"/>
<text class="ttl" x="60" y="7" textLength="78" lengthAdjust="spacingAndGlyphs">ДЛЯ ЧЕГО ЧИТАЮТ ТЕЛЕГРАММ-КАНАЛЫ</text></g>
<!-- T11 -->
<g transform="translate(766 145)"><rect x=".5" y=".5" width="119" height="67" fill="#fff" stroke="#e8e8e8" stroke-width="1.500"/>
<use href="#G" stroke="#ececec"/><use href="#L"/><use href="#BL" fill="#4a86c0"/><use href="#BO" fill="#e8701f"/><use href="#D" fill="#444"/><use href="#X"/><use href="#LG"/>
<text class="ttl b" x="60" y="7" textLength="66" style="fill:#555" lengthAdjust="spacingAndGlyphs">Для чего читают Телеграмм-каналы</text></g>
</g>
</svg>
</body></html>
